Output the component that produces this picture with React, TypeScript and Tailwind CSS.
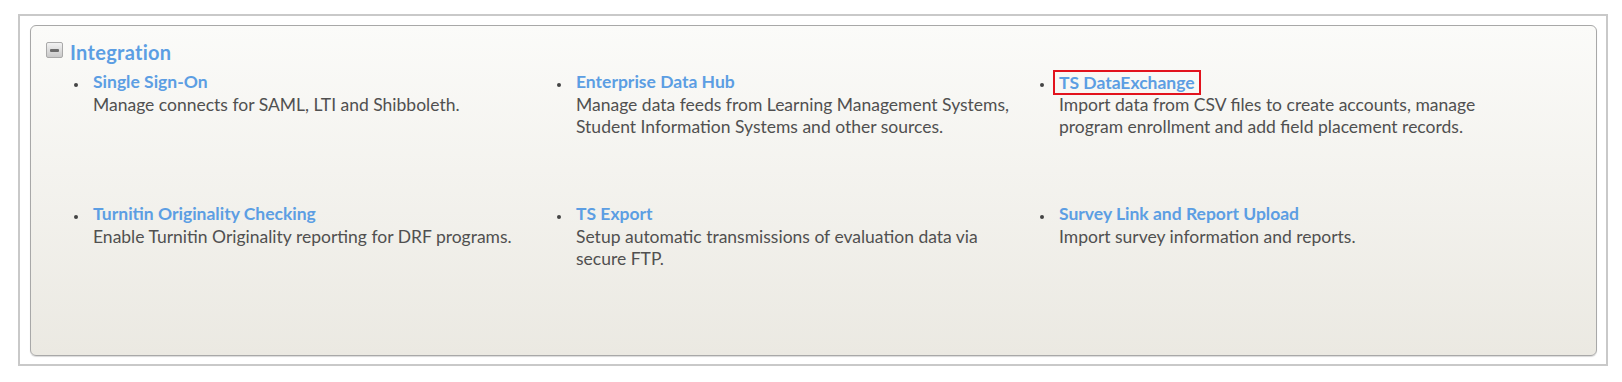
import React from "react";

const items = [
  { title: "Single Sign-On", desc: "Manage connects for SAML, LTI and Shibboleth." },
  { title: "Enterprise Data Hub", desc: "Manage data feeds from Learning Management Systems, Student Information Systems and other sources." },
  { title: "TS DataExchange", desc: "Import data from CSV files to create accounts, manage program enrollment and add field placement records.", boxed: true },
  { title: "Turnitin Originality Checking", desc: "Enable Turnitin Originality reporting for DRF programs." },
  { title: "TS Export", desc: "Setup automatic transmissions of evaluation data via secure FTP." },
  { title: "Survey Link and Report Upload", desc: "Import survey information and reports." },
];

export default function App() {
  return (
    <div className="w-[1622px] h-[382px] bg-white pt-[14px] pl-[18px]" style={{ fontFamily: "Lato, 'Open Sans', sans-serif" }}>
      <div className="w-[1590px] h-[352px] border-2 border-[#c9c9c9] pt-[9px] pl-[10px] pr-[9px]">
        <div className="h-[331px] rounded-[6px] border border-[#a8a8a8] bg-gradient-to-b from-[#fbfbf9] to-[#ebe9e2] shadow-[0_1px_1px_rgba(0,0,0,0.15)] pl-[15px] pt-[14px]">
          <div className="flex items-center gap-[7px] h-[24px]">
            <div className="w-[17px] h-[16px] -mt-[4px] rounded-[2px] border border-[#a9a9a9] bg-gradient-to-b from-[#f2f2f2] to-[#c9c9c9] flex items-center justify-center">
              <div className="w-[9px] h-[3px] bg-[#6b6b6b] rounded-[1px]" />
            </div>
            <span className="text-[20px] font-bold text-[#5c9ee3] leading-[24px] tracking-[0.3px]">Integration</span>
          </div>
          <ul className="grid grid-cols-[483px_483px_483px] auto-rows-[132px] mt-[7px] pl-[28px]">
            {items.map((it) => (
              <li key={it.title} className="flex">
                <span className="w-[19px] pt-[12px] shrink-0">
                  <span className="block w-[4px] h-[4px] rounded-full bg-[#444]" />
                </span>
                <div>
                  <div className="h-[22px] flex items-center">
                    <span
                      className={
                        it.boxed
                          ? "text-[17.5px] font-bold text-[#5c9ee3] leading-[21px] border-2 border-[#e2131d] px-[4px] -ml-[6px]"
                          : "text-[17.5px] font-bold text-[#5c9ee3] leading-[22px]"
                      }
                    >
                      {it.title}
                    </span>
                  </div>
                  <p className="text-[17.5px] text-[#505050] leading-[22px] mt-[1px] max-w-[450px]">{it.desc}</p>
                </div>
              </li>
            ))}
          </ul>
        </div>
      </div>
    </div>
  );
}
